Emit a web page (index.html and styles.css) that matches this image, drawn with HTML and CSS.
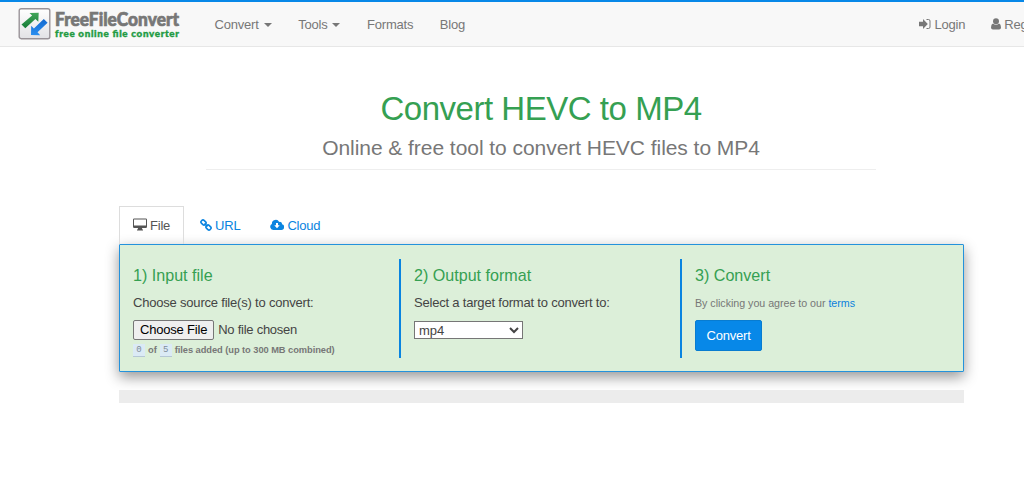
FILE: index.html
```html
<!DOCTYPE html>
<html lang="en">
<head>
<meta charset="utf-8">
<title>Convert HEVC to MP4</title>
<link rel="stylesheet" href="styles.css">
</head>
<body>
<nav class="navbar">
  <a class="brand">
    <svg width="164" height="34" viewBox="0 0 164 34">
      <defs>
        <linearGradient id="green" x1="0" y1="0" x2="0" y2="1"><stop offset="0" stop-color="#43a65b"/><stop offset="1" stop-color="#137b35"/></linearGradient>
        <linearGradient id="blue" x1="0" y1="0" x2="0" y2="1"><stop offset="0" stop-color="#1269cf"/><stop offset="1" stop-color="#2b8ff0"/></linearGradient>
        <linearGradient id="tile" x1="0" y1="0" x2="0" y2="1"><stop offset="0" stop-color="#fff"/><stop offset="1" stop-color="#e2e2e5"/></linearGradient>
      </defs>
      <rect x="1.2" y="1.7" width="30.6" height="30" rx="2" fill="url(#tile)" stroke="#999398" stroke-width="1.4"/>
      <path d="M11.5 6 20.7 5.7 20.3 14.8 17.4 12.1 7.3 21.3 3.5 17.4 14.1 8.5Z" fill="url(#green)"/>
      <path d="M25.8 12 29.6 15.7 19.5 25.2 22.2 28.2 13 28 13.2 18.8 15.9 21.4Z" fill="url(#blue)"/>
      <text class="logo-name" x="37" y="18.500" textLength="124" lengthAdjust="spacingAndGlyphs">FreeFileConvert</text>
      <text class="logo-tag" x="37" y="29.500" textLength="124" lengthAdjust="spacing">free online file converter</text>
    </svg>
  </a>
  <div class="menu">
    <a>Convert<i class="caret"></i></a>
    <a>Tools<i class="caret"></i></a>
    <a>Formats</a>
    <a>Blog</a>
  </div>
  <div class="account">
    <a><svg class="login-icon" width="12" height="12" viewBox="0 0 12 12"><path d="M0 3.700h4V1L8.800 6 4 11V8.300H0Z" fill="#777"/><path d="M7.500 1.500H9.500Q11 1.500 11 3V9Q11 10.500 9.500 10.500H7.500" fill="none" stroke="#777"/></svg>Login</a>
    <a><svg width="10" height="12" viewBox="0 0 10 12"><circle cx="5" cy="3.300" r="3" fill="#777"/><path d="M2 5.500Q5 8 8 5.500 10 6.200 10 9.600 10 11.500 8 11.500H2Q0 11.500 0 9.600 0 6.200 2 5.500Z" fill="#777"/></svg>Register</a>
  </div>
</nav>
<main class="container">
  <header class="page-header">
    <h1>Convert HEVC to MP4</h1>
    <p>Online &amp; free tool to convert HEVC files to MP4</p>
  </header>
  <div class="tabs">
    <a class="tab active"><svg width="14" height="13" viewBox="0 0 14 13"><path fill-rule="evenodd" d="M1.200.5H12.800Q14 .5 14 1.700V8.800Q14 10 12.800 10H9L9.300 11.500H10V12.500H4V11.500H4.700L5 10H1.200Q0 10 0 8.800V1.700Q0 .5 1.200.5ZM1 1.500V7.500H13V1.500Z" fill="#555"/></svg>File</a>
    <a class="tab url"><svg width="12" height="12" viewBox="0 0 12 12" fill="none" stroke="#0a84e0" stroke-width="1.600"><rect x="-2.600" y="-1.900" width="5.200" height="3.800" rx="1.500" transform="translate(3.500 3.500) rotate(45)"/><rect x="-2.600" y="-1.900" width="5.200" height="3.800" rx="1.500" transform="translate(8.500 8.500) rotate(45)"/><path d="M4.500 4.500 7.500 7.500"/></svg>URL</a>
    <a class="tab cloud"><svg width="14" height="12" viewBox="0 0 14 12"><path d="M3.200 11A3.200 3.200 0 0 1 1.900 5 3.900 3.900 0 0 1 9.200 2.900 2.200 2.200 0 0 1 12 5.300 2.900 2.900 0 0 1 11 11Z" fill="#0a84e0"/><path d="M6 4H8V6.300H9.700L7 9.200 4.300 6.300H6Z" fill="#fff"/></svg>Cloud</a>
  </div>
  <section class="panel">
    <div class="step">
      <h2>1) Input file</h2>
      <label class="lead">Choose source file(s) to convert:</label>
      <input class="file" type="file">
      <div class="count"><code>0</code><span>of</span><code>5</code><span>files added (up to 300 MB combined)</span></div>
    </div>
    <div class="step">
      <h2>2) Output format</h2>
      <label class="lead">Select a target format to convert to:</label>
      <select class="format"><option>mp4</option></select>
    </div>
    <div class="step">
      <h2>3) Convert</h2>
      <p class="lead agree">By clicking you agree to our <a>terms</a></p>
      <button class="submit">Convert</button>
    </div>
  </section>
  <div class="progress"></div>
</main>
</body>
</html>
```
FILE: styles.css
```css
* { box-sizing: border-box; }
body {
  margin: 0;
  height: 483px;
  overflow: hidden;
  background: #fff;
  color: #444;
  font: 13px/18px "Liberation Sans", Arial, sans-serif;
  letter-spacing: -.2px;
  white-space: nowrap;
}
h1, h2, p { margin: 0; font-weight: 400; }
.navbar {
  display: flex;
  height: 47px;
  padding-left: 18px;
  border-top: 2px solid #0788e8;
  border-bottom: 1px solid #e7e7e7;
  background: #f8f8f8;
  color: #777;
}
.brand { width: 196.500px; padding-top: 5px; letter-spacing: 0; }
.brand svg { display: block; }
.logo-name { font: 900 18.5px Lato, sans-serif; fill: #777; stroke: #777; stroke-width: .7px; }
.logo-tag { font: 900 9.8px Lato, sans-serif; fill: #229b43; stroke: #229b43; stroke-width: .4px; }
.menu { display: flex; gap: 26.5px; padding-top: 14px; }
.caret {
  display: inline-block;
  margin-left: 5px;
  vertical-align: 2px;
  border: 3.5px solid transparent;
  border-width: 4px 4px 0;
  border-top-color: #777;
}
.account { display: flex; flex: none; gap: 26px; margin-left: auto; margin-right: -27px; padding-top: 14px; }
.account svg { margin-right: 3px; vertical-align: -1px; }
.container { width: 845px; margin-left: 119px; }
.page-header {
  width: 670px;
  height: 123px;
  margin-left: 87px;
  padding-top: 44px;
  border-bottom: 1px solid #eee;
  text-align: center;
}
.page-header h1 { color: #35a052; font-size: 33px; line-height: 36px; letter-spacing: -.47px; }
.page-header p { margin-top: 9px; color: #777; font-size: 21px; line-height: 24px; letter-spacing: -.05px; }
.tabs { display: flex; height: 38px; margin-top: 36px; color: #0a84e0; }
.tab { height: 38px; padding: 10px 13px; border: 1px solid transparent; }
.tab svg { margin-right: 3px; vertical-align: -1px; }
.active { width: 65px; border-color: #ddd; border-bottom: 0; color: #555; }
.url { margin-left: 2px; }
.cloud { margin-left: 2px; }
.panel {
  display: flex;
  height: 128px;
  padding: 14px 0;
  border: 1px solid #2492dc;
  border-radius: 1px;
  background: #dcefd9;
  box-shadow: 0 5px 14px rgba(0, 0, 0, .42);
}
.step { width: 281px; height: 99px; padding: 6px 13px; }
.step:first-child { width: 279px; }
.step + .step { border-left: 2px solid #0a84e0; }
.step h2 { color: #35a052; font-size: 16.1px; line-height: 20px; letter-spacing: 0; }
.lead { display: block; margin-top: 9px; line-height: 18px; }
.file {
  display: block;
  width: 210px;
  height: 20px;
  margin-top: 8px;
  font: 13px/18px "Liberation Sans", Arial, sans-serif;
  letter-spacing: -.25px;
}
.file::file-selector-button {
  height: 20px;
  margin: 0 4px 0 0;
  padding: 0 6px;
  border: 1px solid #767676;
  border-radius: 2px;
  background: #efefef;
  color: #000;
  font: inherit;
  letter-spacing: -.2px;
}
.count { display: flex; align-items: center; gap: 3px; height: 13px; margin-top: 4px; color: #777; font-size: 9.3px; line-height: 13px; font-weight: 700; letter-spacing: -.05px; }
.count code {
  width: 12px;
  height: 13px;
  border-bottom: 1px solid #b5c7d5;
  background: #dbeaf5;
  color: #7e8b98;
  font: 9px/12px "Liberation Mono", monospace;
  text-align: center;
}
.format {
  display: block;
  width: 109px;
  height: 18px;
  margin-top: 9px;
  padding: 0;
  border: 1px solid #767676;
  border-radius: 0;
  background: #fff;
  color: #444;
  font: 13px "Liberation Sans", Arial, sans-serif;
}
.agree { color: #777; font-size: 10.7px; letter-spacing: -.03px; }
.agree a { color: #0a7fdc; }
.submit {
  display: block;
  width: 67px;
  height: 31px;
  margin-top: 8px;
  padding: 0;
  border: 1px solid #087cd0;
  border-radius: 2px;
  background: #0788e8;
  color: #fff;
  font: 13px "Liberation Sans", Arial, sans-serif;
  letter-spacing: -.2px;
}
.progress { height: 13px; margin-top: 18px; background: #ececec; }
```
